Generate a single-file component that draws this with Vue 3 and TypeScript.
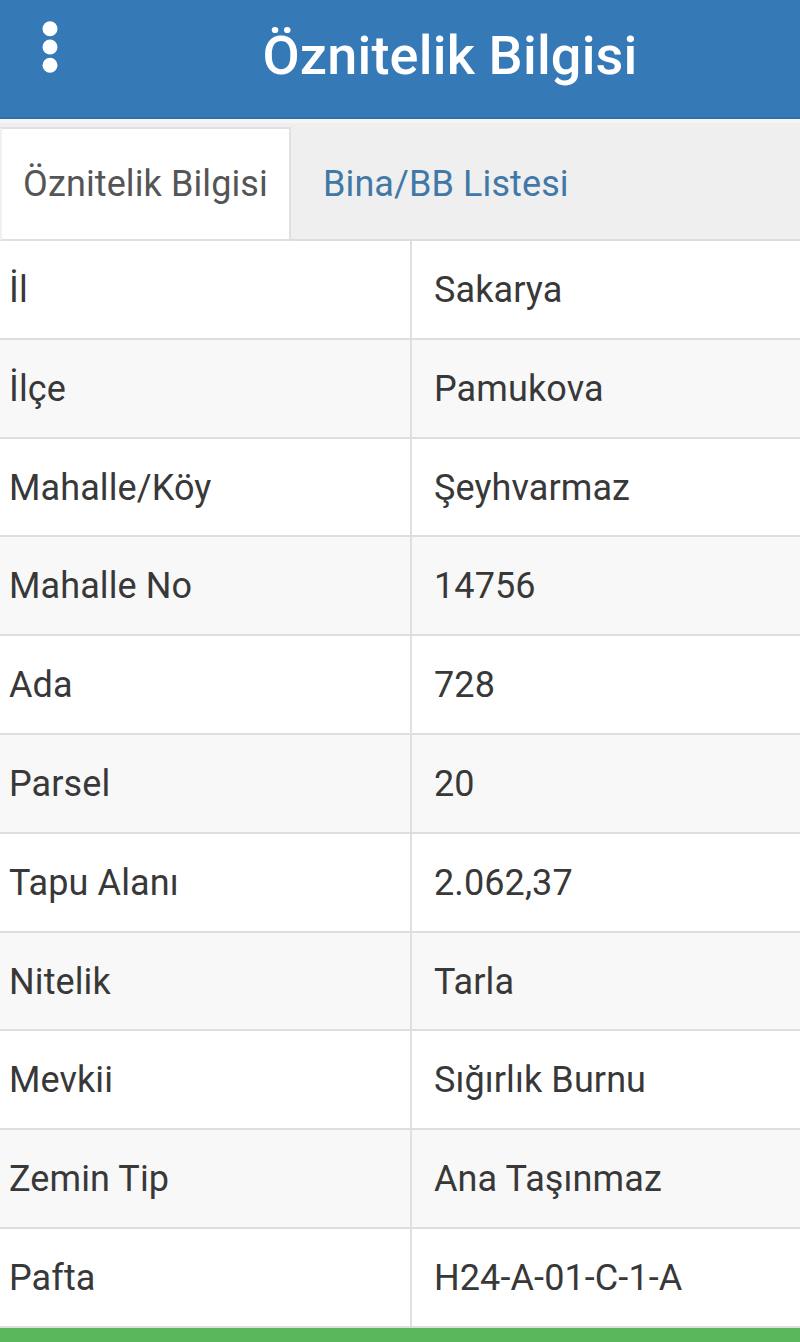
<script setup lang="ts">
import { ref } from "vue";

interface Attribute {
  label: string;
  value: string;
}

const tabs = ["Öznitelik Bilgisi", "Bina/BB Listesi"];
const activeTab = ref(0);

const attributes: Attribute[] = [
  { label: "İl", value: "Sakarya" },
  { label: "İlçe", value: "Pamukova" },
  { label: "Mahalle/Köy", value: "Şeyhvarmaz" },
  { label: "Mahalle No", value: "14756" },
  { label: "Ada", value: "728" },
  { label: "Parsel", value: "20" },
  { label: "Tapu Alanı", value: "2.062,37" },
  { label: "Nitelik", value: "Tarla" },
  { label: "Mevkii", value: "Sığırlık Burnu" },
  { label: "Zemin Tip", value: "Ana Taşınmaz" },
  { label: "Pafta", value: "H24-A-01-C-1-A" },
];
</script>

<template>
  <div class="page">
    <header class="header">
      <button class="menu" type="button">
        <svg width="16" height="52" viewBox="0 0 16 52">
          <circle cx="8" cy="7.8" r="7.5" />
          <circle cx="8" cy="26" r="7.5" />
          <circle cx="8" cy="44.2" r="7.5" />
        </svg>
      </button>
      <h1 class="title">Öznitelik Bilgisi</h1>
    </header>
    <nav class="tabs">
      <button
        v-for="(tab, index) in tabs"
        :key="tab"
        type="button"
        class="tab"
        :class="{ active: activeTab === index }"
        @click="activeTab = index"
      >
        {{ tab }}
      </button>
    </nav>
    <dl class="attributes">
      <div v-for="item in attributes" :key="item.label" class="row">
        <dt>{{ item.label }}</dt>
        <dd>{{ item.value }}</dd>
      </div>
    </dl>
    <footer class="footer"></footer>
  </div>
</template>

<style>
body {
  margin: 0;
}
</style>

<style scoped>
.page {
  display: flex;
  flex-direction: column;
  width: 800px;
  height: 1342px;
  overflow: hidden;
  background: #fff;
  color: #383838;
  font-family: Roboto, "Liberation Sans", sans-serif;
  font-size: 36px;
  letter-spacing: 0.1px;
}

button {
  margin: 0;
  border: 0;
  background: none;
  font: inherit;
  letter-spacing: inherit;
}

.header {
  display: grid;
  grid-template-columns: 100px 700px;
  flex: none;
  box-sizing: border-box;
  height: 119px;
  border-bottom: 2px solid #2f6fab;
  background: #3579b7;
}

.menu {
  display: flex;
  justify-content: center;
  padding: 21px 0 0;
}

.menu svg {
  fill: #fff;
}

.title {
  margin: 0;
  color: #fff;
  font-size: 54px;
  font-weight: 500;
  line-height: 111px;
  letter-spacing: 0.2px;
  text-align: center;
}

.tabs {
  display: flex;
  flex: none;
  box-sizing: border-box;
  height: 122px;
  padding-top: 4px;
  border-top: 4px solid #f5f5f8;
  background: #efefef;
  box-shadow: inset 0 -2px #dcdcdc;
}

.tab {
  padding: 0 22px 0 32px;
  color: #4178a8;
  line-height: 108px;
}

.tab.active {
  box-sizing: border-box;
  width: 291px;
  padding: 0;
  border: 2px solid #e0e0e2;
  border-left-color: #f0f0f0;
  background: #fff;
  color: #555;
}

.tab:not(.active) {
  margin-top: -1px;
}

.attributes {
  flex: none;
  margin: 0;
}

.row {
  display: grid;
  grid-template-columns: 412px 1fr;
  box-sizing: border-box;
  height: 98.8px;
  border-bottom: 2px solid #dedede;
  line-height: 99px;
}

.row:nth-child(even) {
  background: #f8f8f8;
}

dt {
  padding-left: 9px;
  border-right: 2px solid #e0e0e0;
}

dd {
  height: 96px;
  margin: 0;
  padding-left: 22px;
}

dt {
  height: 96.8px;
}

.footer {
  flex: 1;
  background: #5ab75c;
}
</style>
